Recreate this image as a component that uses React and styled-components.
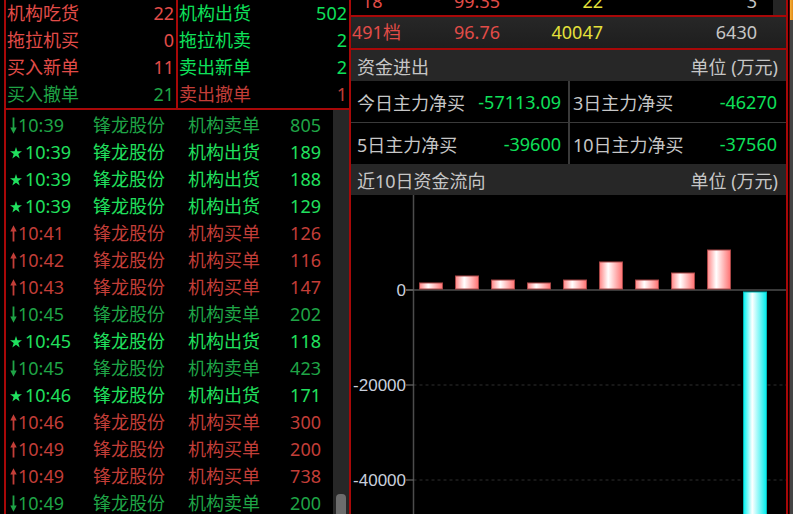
import React from 'react';
import styled, { createGlobalStyle } from 'styled-components';

const C = {
  frame: '#a80808',
  red: '#e24c48',
  redDim: '#c23e38',
  green: '#0ee05a',
  greenDim: '#1fa446',
  star: '#20e05e',
  yellow: '#e4e03a',
  text: '#c6c6c6',
  divider: '#3a3a3a',
  header: '#272727',
};

const FONT = `"Noto Sans", "Noto Sans CJK SC", sans-serif`;

const GlobalStyle = createGlobalStyle`
  html, body {
    margin: 0;
    padding: 0;
    background: #000;
    overflow: hidden;
  }
  body {
    font-family: ${FONT};
  }
`;

const Screen = styled.div`
  display: flex;
  width: 793px;
  height: 514px;
  overflow: hidden;
  background: #000;
`;

/* ---------- left: stats + trade list ---------- */

const LeftCol = styled.div`
  flex: none;
  width: 351px;
  padding-left: 4px;
  box-sizing: border-box;
  display: flex;
`;

const LeftPanel = styled.div`
  flex: 1;
  min-width: 0;
  display: flex;
  flex-direction: column;
  border-left: 2px solid ${C.frame};
  border-right: 2px solid ${C.frame};
`;

const StatsGrid = styled.div`
  display: grid;
  grid-template-columns: 170px 1fr;
  border-bottom: 2px solid ${C.frame};
`;

const StatsColumn = styled.div`
  & + & {
    border-left: 2px solid ${C.frame};
  }
`;

const StatRow = styled.div`
  display: flex;
  justify-content: space-between;
  height: 27px;
  line-height: 27px;
  font-size: 18px;
  padding: 0 2px 0 1px;
  color: ${(p) => p.$color};
`;

const ListArea = styled.div`
  flex: 1;
  min-height: 0;
  display: flex;
  overflow: hidden;
`;

const TradeList = styled.div`
  flex: 1;
  padding-top: 2px;
`;

const TradeRow = styled.div`
  display: grid;
  grid-template-columns: 83px 95px 1fr auto;
  height: 27px;
  line-height: 27px;
  font-size: 18px;
  padding: 0 12px 0 4px;
  color: ${(p) => p.$color};
  white-space: nowrap;
`;

const TimeCell = styled.span`
  display: flex;
  align-items: center;
`;

const Mark = styled.svg`
  flex: none;
  margin-right: ${(p) => p.$gap}px;
`;

const ScrollTrack = styled.div`
  flex: none;
  width: 16px;
  background: #272727;
  display: flex;
  flex-direction: column;
  justify-content: flex-end;
  align-items: center;
`;

const ScrollThumb = styled.div`
  width: 10px;
  height: 24px;
  margin-bottom: -4px;
  border-radius: 4px;
  background: #6c6c6c;
`;

/* ---------- right: order book tail, fund flow ---------- */

const RightCol = styled.div`
  flex: none;
  width: 437px;
  box-sizing: border-box;
  border-right: 2px solid ${C.frame};
  display: flex;
  flex-direction: column;
`;

const PeekBar = styled.div`
  display: flex;
  height: 15px;
  overflow: hidden;
  border-bottom: 2px solid ${C.frame};
`;

const PeekScroll = styled.div`
  flex: none;
  width: 13px;
  background: #252525;
`;

const LevelGrid = styled.div`
  flex: 1;
  display: grid;
  grid-template-columns: 69px 80px 103px 154px 1fr;
  font-size: 18px;
  white-space: nowrap;
`;

const PeekRow = styled(LevelGrid)`
  height: 30px;
  line-height: 30px;
  margin-top: -14px;
`;

const SummaryRow = styled(LevelGrid)`
  flex: none;
  height: 31px;
  line-height: 31px;
  background: linear-gradient(#272727, #1e1e1e);
  border-bottom: 2px solid ${C.frame};
`;

const LevelCell = styled.span`
  color: ${(p) => p.$color};
  text-align: ${(p) => (p.$left ? 'left' : 'right')};
  padding-left: ${(p) => p.$indent || 0}px;
`;

const SectionHeader = styled.div`
  flex: none;
  height: 31px;
  display: flex;
  align-items: center;
  justify-content: space-between;
  padding: 0 8px 0 6px;
  background: ${C.header};
  color: ${C.text};
  font-size: 18px;
`;

const FlowGrid = styled.div`
  flex: none;
  display: grid;
  grid-template-columns: 217px 1fr;
  grid-template-rows: 42px 41px;
`;

const FlowCell = styled.div`
  display: flex;
  align-items: center;
  justify-content: space-between;
  box-sizing: border-box;
  font-size: 18px;
  color: ${C.text};
  padding: ${(p) => (p.$right ? '0 9px 0 3px' : '0 7px 0 6px')};
  border-left: ${(p) => (p.$right ? `2px solid ${C.divider}` : 'none')};
  border-bottom: ${(p) => (p.$top ? `1px solid ${C.divider}` : 'none')};
`;

const FlowValue = styled.span`
  color: ${C.green};
`;

const ChartArea = styled.div`
  flex: 1;
  min-height: 0;
  overflow: hidden;
`;

const EdgeStrip = styled.div`
  flex: none;
  width: 5px;
  box-sizing: border-box;
  border-left: 1px solid #000;
  box-shadow: inset 1px 0 0 #5c0000;
  background: #444;
  display: flex;
  flex-direction: column;
`;

const EdgeThumb = styled.div`
  height: 20px;
  margin-left: 1px;
  background: linear-gradient(90deg, #f7b23a, #e08a18);
`;

/* ---------- data ---------- */

const stats = [
  [
    { label: '机构吃货', value: 22, color: C.red },
    { label: '拖拉机买', value: 0, color: C.red },
    { label: '买入新单', value: 11, color: C.red },
    { label: '买入撤单', value: 21, color: C.greenDim },
  ],
  [
    { label: '机构出货', value: 502, color: C.green },
    { label: '拖拉机卖', value: 2, color: C.green },
    { label: '卖出新单', value: 2, color: C.green },
    { label: '卖出撤单', value: 1, color: C.redDim },
  ],
];

const kinds = {
  down: { type: '机构卖单', color: C.greenDim },
  star: { type: '机构出货', color: C.star },
  up: { type: '机构买单', color: C.redDim },
};

const trades = [
  ['down', '10:39', 805],
  ['star', '10:39', 189],
  ['star', '10:39', 188],
  ['star', '10:39', 129],
  ['up', '10:41', 126],
  ['up', '10:42', 116],
  ['up', '10:43', 147],
  ['down', '10:45', 202],
  ['star', '10:45', 118],
  ['down', '10:45', 423],
  ['star', '10:46', 171],
  ['up', '10:46', 300],
  ['up', '10:49', 200],
  ['up', '10:49', 738],
  ['down', '10:49', 200],
];

const flows = [
  { label: '今日主力净买', value: '-57113.09' },
  { label: '3日主力净买', value: '-46270' },
  { label: '5日主力净买', value: '-39600' },
  { label: '10日主力净买', value: '-37560' },
];

const daily = [1270, 2740, 1890, 1270, 1890, 5690, 1890, 3370, 8210, -57113.09];

/* ---------- pieces ---------- */

function TradeMark({ kind }) {
  if (kind === 'star') {
    return (
      <Mark $gap={3} width="12" height="12" viewBox="0 0 12 12" fill="currentColor">
        <polygon points="6,0 7.4,4.3 12,4.3 8.3,7 9.7,11.6 6,8.8 2.3,11.6 3.7,7 0,4.3 4.6,4.3" />
      </Mark>
    );
  }
  const down = kind === 'down';
  return (
    <Mark $gap={1} width="7" height="17" viewBox="0 0 7 17" fill="currentColor">
      {down ? (
        <>
          <rect x="2.6" y="0.5" width="1.8" height="12" />
          <polygon points="0.3,10.5 6.7,10.5 3.5,16.8" />
        </>
      ) : (
        <>
          <rect x="2.6" y="4.5" width="1.8" height="12" />
          <polygon points="0.3,6.5 6.7,6.5 3.5,0.2" />
        </>
      )}
    </Mark>
  );
}

function FlowChart() {
  const zeroY = 95;
  const scale = 95 / 20000;
  const axisX = 62.5;
  const ticks = [0, -20000, -40000];
  return (
    <svg width="435" height="319" style={{ display: 'block' }}>
      <defs>
        <linearGradient id="barUp" x1="0" x2="1" y1="0" y2="0">
          <stop offset="0" stopColor="#ff8686" />
          <stop offset="0.38" stopColor="#ffffff" />
          <stop offset="1" stopColor="#ff7272" />
        </linearGradient>
        <linearGradient id="barDown" x1="0" x2="1" y1="0" y2="0">
          <stop offset="0" stopColor="#00f2f2" />
          <stop offset="0.38" stopColor="#ffffff" />
          <stop offset="1" stopColor="#00eeee" />
        </linearGradient>
      </defs>

      {ticks.slice(1).map((t) => {
        const y = zeroY - t * scale;
        return (
          <line key={t} x1={axisX} x2="435" y1={y} y2={y} stroke="#2e2e2e" strokeDasharray="3 3" />
        );
      })}
      <line x1="55" x2="435" y1={zeroY} y2={zeroY} stroke="#4c4c4c" strokeWidth="1.6" />
      <line x1={axisX} x2={axisX} y1="0" y2="319" stroke="#4c4c4c" strokeWidth="1.5" />

      {ticks.map((t) => {
        const y = zeroY - t * scale;
        return (
          <g key={t}>
            <line x1="55" x2={axisX} y1={y} y2={y} stroke="#7a7a7a" />
            <text
              x="55"
              y={y + 6}
              textAnchor="end"
              fontSize="17"
              fontFamily='"Liberation Sans", Arial, sans-serif'
              fill="#c8cfdc"
            >
              {t}
            </text>
          </g>
        );
      })}

      {daily.map((v, i) => {
        const x = 68 + 36 * i;
        const h = Math.abs(v) * scale;
        const up = v >= 0;
        return (
          <rect
            key={i}
            x={x + 0.5}
            y={up ? zeroY - 1 - h : zeroY + 2}
            width="23"
            height={h}
            fill={up ? 'url(#barUp)' : 'url(#barDown)'}
            stroke={up ? '#a84646' : '#00b8b8'}
            strokeWidth="1"
          />
        );
      })}
    </svg>
  );
}

export default function App() {
  return (
    <Screen>
      <GlobalStyle />

      <LeftCol>
        <LeftPanel>
          <StatsGrid>
            {stats.map((col, ci) => (
              <StatsColumn key={ci}>
                {col.map((s) => (
                  <StatRow key={s.label} $color={s.color}>
                    <span>{s.label}</span>
                    <span>{s.value}</span>
                  </StatRow>
                ))}
              </StatsColumn>
            ))}
          </StatsGrid>

          <ListArea>
            <TradeList>
              {trades.map(([kind, time, amount], i) => (
                <TradeRow key={i} $color={kinds[kind].color}>
                  <TimeCell>
                    <TradeMark kind={kind} />
                    {time}
                  </TimeCell>
                  <span>锋龙股份</span>
                  <span>{kinds[kind].type}</span>
                  <span>{amount}</span>
                </TradeRow>
              ))}
            </TradeList>
            <ScrollTrack>
              <ScrollThumb />
            </ScrollTrack>
          </ListArea>
        </LeftPanel>
      </LeftCol>

      <RightCol>
        <PeekBar>
          <PeekRow>
            <LevelCell $left $indent={11} $color={C.red}>18</LevelCell>
            <LevelCell $color={C.red}>99.35</LevelCell>
            <LevelCell $color={C.yellow}>22</LevelCell>
            <LevelCell $color={C.text}>3</LevelCell>
          </PeekRow>
          <PeekScroll />
        </PeekBar>

        <SummaryRow>
          <LevelCell $left $indent={1} $color={C.red}>491档</LevelCell>
          <LevelCell $color={C.red}>96.76</LevelCell>
          <LevelCell $color={C.yellow}>40047</LevelCell>
          <LevelCell $color={C.text}>6430</LevelCell>
        </SummaryRow>

        <SectionHeader>
          <span>资金进出</span>
          <span>单位 (万元)</span>
        </SectionHeader>

        <FlowGrid>
          {flows.map((f, i) => (
            <FlowCell key={f.label} $right={i % 2 === 1} $top={i < 2}>
              <span>{f.label}</span>
              <FlowValue>{f.value}</FlowValue>
            </FlowCell>
          ))}
        </FlowGrid>

        <SectionHeader>
          <span>近10日资金流向</span>
          <span>单位 (万元)</span>
        </SectionHeader>

        <ChartArea>
          <FlowChart />
        </ChartArea>
      </RightCol>

      <EdgeStrip>
        <EdgeThumb />
      </EdgeStrip>
    </Screen>
  );
}
